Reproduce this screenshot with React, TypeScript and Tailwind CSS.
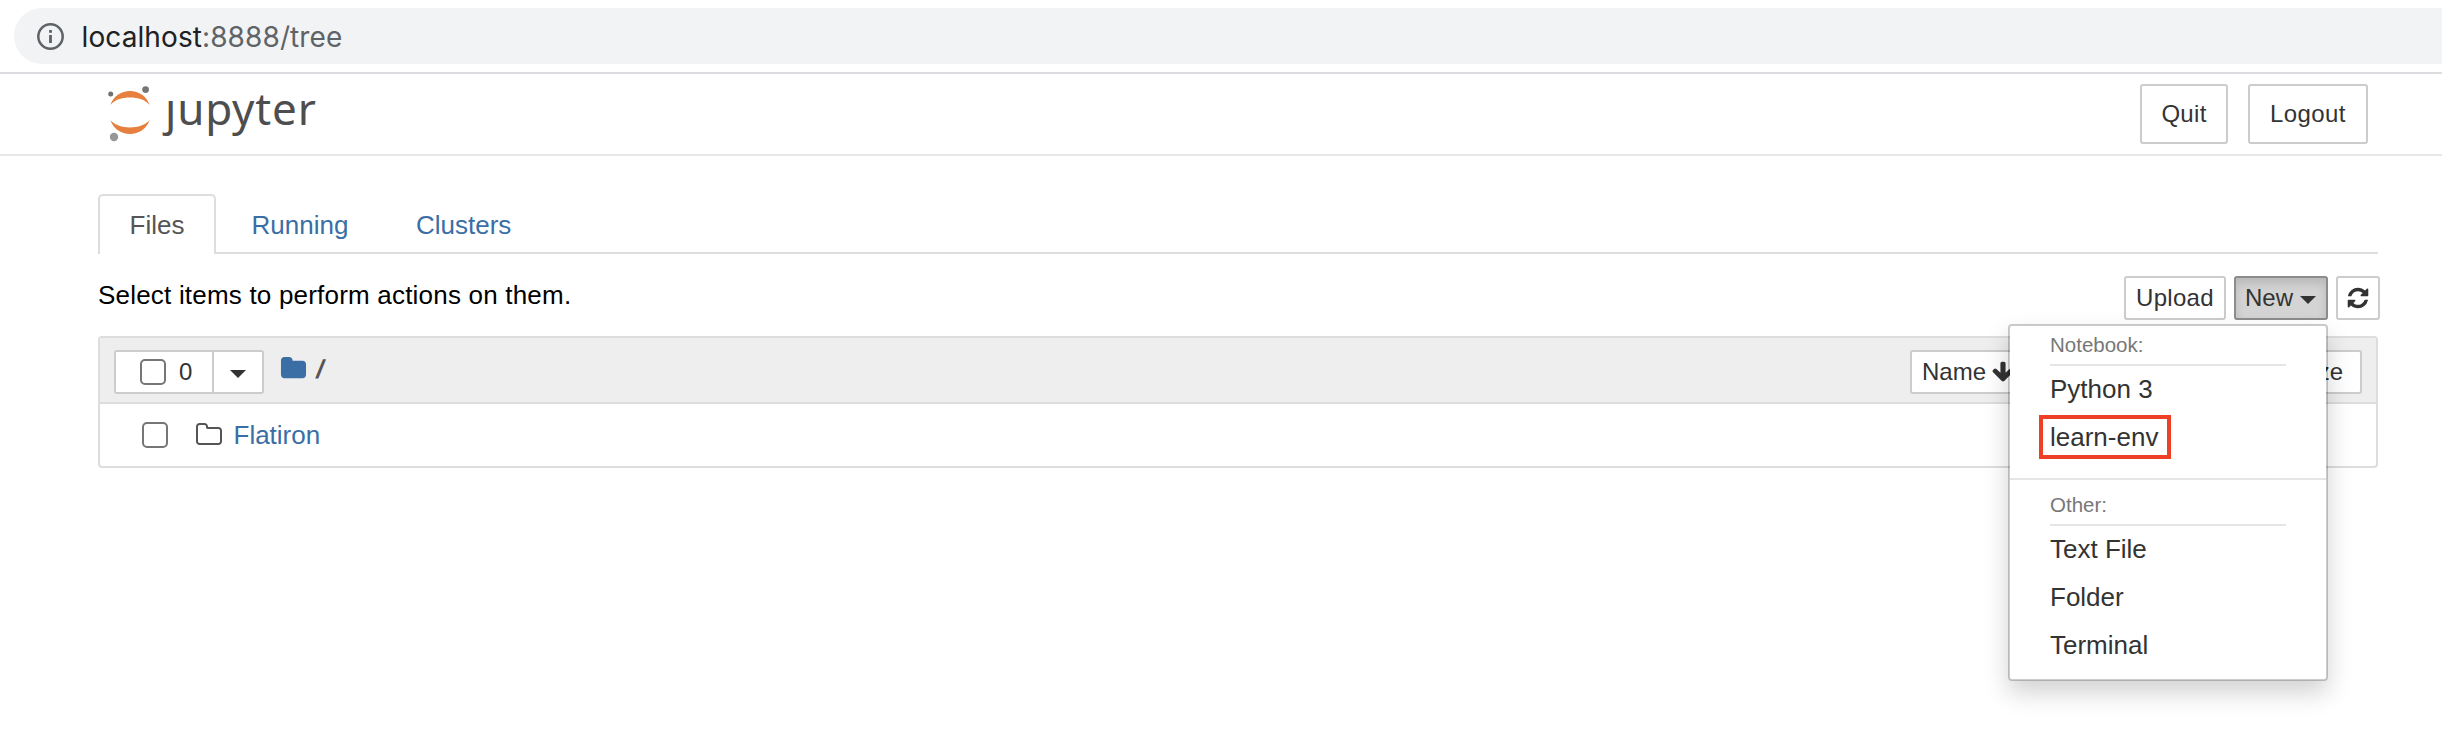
import type { ReactNode } from "react";

const paths = {
  folder:
    "M1728 608v704q0 92-66 158t-158 66h-1216q-92 0-158-66t-66-158v-960q0-92 66-158t158-66h320q92 0 158 66t66 158v32h672q92 0 158 66t66 158z",
  folderOpen:
    "M1600 1312v-704q0-40-28-68t-68-28h-704q-40 0-68-28t-28-68v-64q0-40-28-68t-68-28h-320q-40 0-68 28t-28 68v960q0 40 28 68t68 28h1216q40 0 68-28t28-68zm128-704v704q0 92-66 158t-158 66h-1216q-92 0-158-66t-66-158v-960q0-92 66-158t158-66h320q92 0 158 66t66 158v32h672q92 0 158 66t66 158z",
  arrowDown:
    "M1675 832q0 53-37 90l-651 652q-39 37-91 37-53 0-90-37l-651-652q-38-36-38-90 0-53 38-91l74-75q39-37 91-37 53 0 90 37l294 294v-704q0-52 38-90t90-38h128q52 0 90 38t38 90v704l294-294q37-37 90-37 52 0 91 37l75 75q37 39 37 91z",
  refresh:
    "M1639 1056q0 5-1 7-64 268-268 434.5t-478 166.5q-146 0-282.5-55t-243.5-157l-129 129q-19 19-45 19t-45-19-19-45v-448q0-26 19-45t45-19h448q26 0 45 19t19 45-19 45l-137 137q71 66 161 102t187 36q134 0 250-65t186-179q11-17 53-117 8-23 30-23h192q13 0 22.5 9.5t9.5 22.5zm25-800v448q0 26-19 45t-45 19h-448q-26 0-45-19t-19-45 19-45l138-138q-148-137-349-137-134 0-250 65t-186 179q-11 17-53 117-8 23-30 23h-199q-13 0-22.5-9.5t-9.5-22.5v-7q65-268 270-434.5t480-166.5q146 0 284 55.5t245 156.5l130-129q19-19 45-19t45 19 19 45z",
};

function Icon({ name, className }: { name: keyof typeof paths; className: string }) {
  return (
    <svg viewBox="0 0 1792 1792" className={`shrink-0 fill-current ${className}`}>
      <path d={paths[name]} />
    </svg>
  );
}

function Caret({ className = "" }: { className?: string }) {
  return (
    <svg viewBox="0 0 16 8" className={`h-2 w-4 shrink-0 fill-current ${className}`}>
      <path d="M0 0H16L8 8Z" />
    </svg>
  );
}

function Button({ className, children }: { className: string; children?: ReactNode }) {
  return (
    <button
      className={`flex shrink-0 items-center rounded-[3px] border-2 border-[#ccc] bg-white text-[24px] whitespace-nowrap text-[#333] ${className}`}
    >
      {children}
    </button>
  );
}

function Checkbox({ className = "" }: { className?: string }) {
  return <span className={`h-[26px] w-[26px] shrink-0 rounded-[5px] border-2 border-[#767676] bg-white ${className}`} />;
}

function AddressBar() {
  return (
    <div className="h-[74px] overflow-hidden border-b-2 border-[#dadce0] pt-2 pl-[14px]">
      <div className="flex h-14 items-center rounded-l-full bg-[#f1f3f4] pl-[23px]">
        <svg viewBox="0 0 27 27" className="h-[27px] w-[27px] fill-[#5f6368]">
          <circle cx="13.5" cy="13.5" r="12.2" fill="none" stroke="#5f6368" strokeWidth="2.5" />
          <rect x="12.1" y="7" width="2.8" height="2.8" />
          <rect x="12.1" y="12" width="2.8" height="8" />
        </svg>
        <div className="mt-[2px] ml-[17.5px] font-[Inter] text-[28px] leading-[56px] tracking-[0.1px] text-[#5f6368]">
          <span className="text-[#202124]">localhost</span>:8888/tree
        </div>
      </div>
    </div>
  );
}

function Logo() {
  return (
    <div className="flex h-20 w-[220px] items-start">
      <svg viewBox="0 0 44 60" className="mt-[9px] h-[60px] w-11 shrink-0">
        <path d="M2.3 22C5.2 13.5 13 8 22 8s16.8 5.5 19.7 14C37.5 17 30 14.6 22 14.6S6.5 17 2.3 22Z" fill="#e7803f" />
        <path d="M2.3 37C5.2 45.5 13 51 22 51s16.8-5.5 19.7-14C37.5 42 30 44.4 22 44.4S6.5 42 2.3 37Z" fill="#e7803f" />
        <circle cx="2.7" cy="11" r="2.5" fill="#6f7070" />
        <circle cx="37.6" cy="6.6" r="3.4" fill="#767677" />
        <circle cx="6" cy="54" r="4.2" fill="#989798" />
      </svg>
      <span className="ml-[13px] font-['Noto_Sans'] text-[44px] leading-[68px] tracking-[0.8px] text-[#4e4e4e]">
        ȷupyter
      </span>
    </div>
  );
}

function MenuSection({ title, children }: { title: string; children: ReactNode }) {
  return (
    <div className="px-10">
      <div className="h-[36px] border-b-2 border-[#e5e5e5] text-[20.5px] leading-[30px] text-[#777]">{title}</div>
      <div className="flex flex-col text-[26px] leading-[48px] text-[#333]">{children}</div>
    </div>
  );
}

function MenuItem({ children }: { children: ReactNode }) {
  return <span className="h-12 leading-[46px]">{children}</span>;
}

function NewMenu() {
  return (
    <div className="absolute top-[48px] right-[-2px] z-10 h-[357px] w-[320px] rounded-[4px] border-2 border-black/20 bg-white bg-clip-padding pt-1 shadow-[0_12px_24px_rgba(0,0,0,0.175)]">
      <MenuSection title="Notebook:">
        <MenuItem>Python 3</MenuItem>
        <div className="relative flex">
          <MenuItem>learn-env</MenuItem>
          <span className="absolute top-[1px] left-[-11px] h-11 w-[132px] border-4 border-[#ee4027]" />
        </div>
      </MenuSection>
      <div className="mt-4 mb-[10px] h-[2px] bg-[#e5e5e5]" />
      <MenuSection title="Other:">
        <MenuItem>Text File</MenuItem>
        <MenuItem>Folder</MenuItem>
        <MenuItem>Terminal</MenuItem>
      </MenuSection>
    </div>
  );
}

export default function App() {
  return (
    <div className="h-[752px] w-[2442px] overflow-hidden bg-white font-['Liberation_Sans',sans-serif] text-[26px] text-black">
      <AddressBar />
      <header className="flex h-[82px] items-start border-b-2 border-[#e7e7e7] pl-[108px]">
        <Logo />
        <div className="mt-[10px] mr-[74px] ml-auto flex gap-5">
          <Button className="h-[60px] w-[88px] justify-center tracking-[0.3px]">Quit</Button>
          <Button className="h-[60px] w-[120px] justify-center tracking-[0.4px]">Logout</Button>
        </div>
      </header>

      <main className="pt-[38px] pr-16 pl-[98px]">
        <nav className="flex h-[60px] border-b-2 border-[#ddd] leading-[62px]">
          <span className="h-[60px] w-[118px] rounded-t-[5px] border-2 border-b-0 border-[#ddd] bg-white pl-[29.5px] leading-[58px] text-[#555]">
            Files
          </span>
          <span className="w-[164px] pl-[35.5px] text-[#3a6ea5]">Running</span>
          <span className="pl-9 text-[#3a6ea5]">Clusters</span>
        </nav>

        <div className="mt-[22px] flex h-[60px] items-start">
          <span className="leading-[38px] tracking-[0.2px]">Select items to perform actions on them.</span>
          <div className="mr-[-2px] ml-auto flex">
            <Button className="h-11 w-[102px] justify-center tracking-[0.3px]">Upload</Button>
            <div className="relative ml-2">
              <button className="flex h-11 w-[94px] items-center rounded-[3px] border-2 border-[#8c8c8c] bg-[#d4d4d4] pl-[9px] text-[24px] text-[#333] shadow-[inset_0_6px_10px_rgba(0,0,0,0.125)]">
                New
                <Caret className="mt-1 ml-[7px]" />
              </button>
              <div className="relative -mt-11 mr-[2px]">
                <NewMenu />
              </div>
            </div>
            <Button className="ml-2 h-11 w-11 justify-center">
              <Icon name="refresh" className="h-6 w-6" />
            </Button>
          </div>
        </div>

        <section className="h-[132px] rounded-[4px] border-2 border-[#ddd]">
          <div className="flex h-[66px] items-start border-b-2 border-[#ddd] bg-[#eee] pt-3 pr-[14px] pl-[14px]">
            <Button className="h-11 w-[100px] rounded-r-none">
              <Checkbox className="ml-6" />
              <span className="ml-[13px]">0</span>
            </Button>
            <Button className="ml-[-2px] h-11 w-[52px] justify-center rounded-l-none">
              <Caret className="mt-1" />
            </Button>
            <Icon name="folder" className="mt-[5px] ml-4 h-[27px] w-[27px] text-[#3a6ea5]" />
            <span className="ml-[10px] -skew-x-12 text-[26px] leading-[38px] font-bold text-[#555]">/</span>
            <div className="ml-auto flex">
              <Button className="h-11 w-[115px] pl-[10px]">
                Name
                <Icon name="arrowDown" className="ml-[5px] h-6 w-6" />
              </Button>
              <Button className="h-11 w-[258px]" />
              <Button className="h-11 w-[79px] justify-end pr-[17px]">Size</Button>
            </div>
          </div>
          <div className="flex h-[62px] items-center pl-[42px]">
            <Checkbox />
            <Icon name="folderOpen" className="ml-[27px] h-7 w-7 text-[#555]" />
            <span className="ml-[10.5px] text-[#3a6ea5]">Flatiron</span>
          </div>
        </section>
      </main>
    </div>
  );
}
